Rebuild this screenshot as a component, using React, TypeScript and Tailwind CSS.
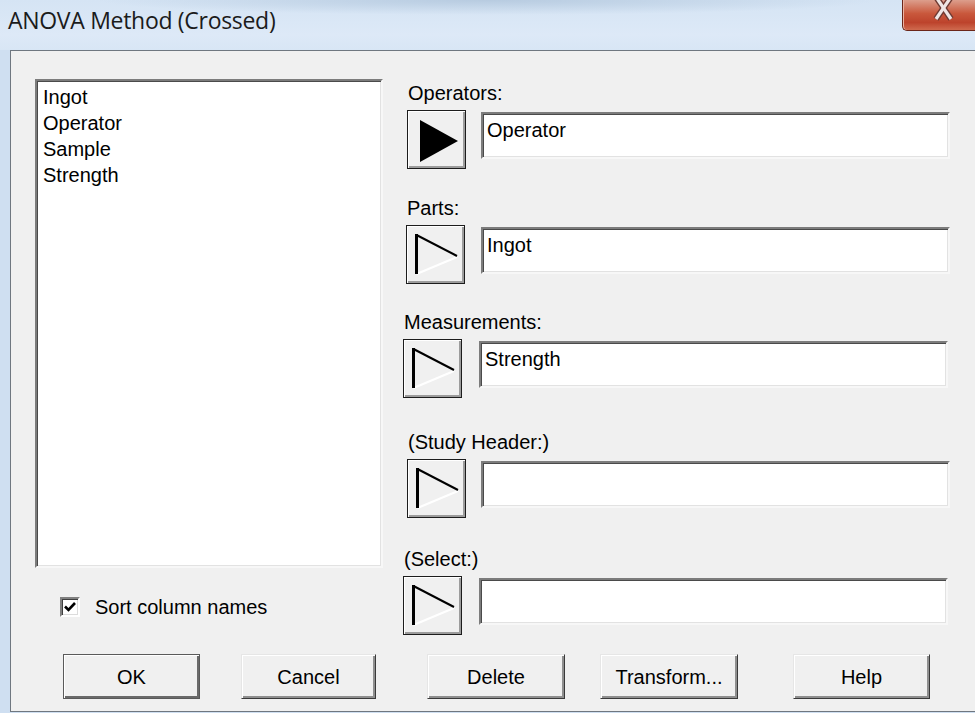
import React from 'react';

type FieldProps = {
  label: string;
  value?: string;
  filled?: boolean;
  mt: number;
  btnX: number;
  boxX: number;
};

// Small triangle arrow drawn on the picker buttons
function ArrowGlyph({ filled }: { filled?: boolean }) {
  if (filled) {
    return (
      <svg width="57" height="57" viewBox="1 1 57 57" className="block">
        <polygon points="13,10 51,31 13,52" fill="#000" />
      </svg>
    );
  }
  return (
    <svg width="57" height="57" viewBox="1 1 57 57" className="block">
      <line x1="10.5" y1="49" x2="51" y2="32" stroke="#ffffff" strokeWidth="2" />
      <line x1="10.5" y1="10" x2="51" y2="31" stroke="#000" strokeWidth="2" />
      <line x1="10.5" y1="9" x2="10.5" y2="49" stroke="#000" strokeWidth="3" />
    </svg>
  );
}

const fieldRows: FieldProps[] = [
  { label: 'Operators:', value: 'Operator', filled: true, mt: 31, btnX: 407, boxX: 481 },
  { label: 'Parts:', value: 'Ingot', mt: 28, btnX: 406, boxX: 481 },
  { label: 'Measurements:', value: 'Strength', mt: 27, btnX: 403, boxX: 479 },
  { label: '(Study Header:)', mt: 33, btnX: 407, boxX: 481 },
  { label: '(Select:)', mt: 30, btnX: 403, boxX: 479 },
];

const sunken =
  'border-2 border-t-[#7c7c7c] border-l-[#7c7c7c] border-r-[#f7f7f7] border-b-[#f7f7f7] shadow-[inset_1px_1px_0_#4a4a4a,inset_-1px_-1px_0_#e2e2e2] bg-white';

function Field({ label, value, filled, mt, btnX, boxX }: FieldProps) {
  const rightEdge = boxX === 481 ? 950 : 948;
  return (
    <div style={{ marginTop: mt }}>
      <div className="h-[22px] leading-[22px]" style={{ marginLeft: btnX - 403 + 1 }}>
        {label}
      </div>
      <div className="mt-[6px] flex items-start">
        <button
          className="w-[59px] h-[59px] shrink-0 border border-[#1c1c1c] bg-[#f0f0f0] p-0 shadow-[inset_1px_1px_0_#ffffff,inset_-2px_-2px_0_#9c9c9c]"
          style={{ marginLeft: btnX - 403 }}
        >
          <ArrowGlyph filled={filled} />
        </button>
        <div
          className={`mt-[2px] h-[47px] pl-[4px] pt-[5px] leading-[22px] ${sunken}`}
          style={{ marginLeft: boxX - btnX - 59, width: rightEdge - boxX }}
        >
          {value}
        </div>
      </div>
    </div>
  );
}

function PushButton({ children, w, ml, isDefault }: { children: React.ReactNode; w: number; ml: number; isDefault?: boolean }) {
  return (
    <button
      className={`h-[45px] shrink-0 bg-[#f0f0f0] leading-[22px] ${
        isDefault
          ? 'border border-[#5a5a5a] shadow-[inset_1px_1px_0_#ffffff,inset_-2px_-2px_0_#6a6a6a]'
          : 'border border-t-[#e6e6e6] border-l-[#e6e6e6] border-r-[#3a3a3a] border-b-[#3a3a3a] shadow-[inset_1px_1px_0_#ffffff,inset_-2px_-2px_0_#8f8f8f]'
      }`}
      style={{ width: w, marginLeft: ml }}
    >
      {children}
    </button>
  );
}

export default function App() {
  const columns = ['Ingot', 'Operator', 'Sample', 'Strength'];

  return (
    <div className="w-[975px] h-[713px] overflow-hidden bg-[#cfdff1] font-['Liberation_Sans',Arial,sans-serif] text-[20px] text-black">
      {/* Window caption */}
      <div className="h-[50px] flex items-start bg-[radial-gradient(ellipse_40%_30%_at_50%_0%,#b7cbe0_0%,rgba(183,203,224,0)_100%),linear-gradient(#d5e4f4,#dde9f7_70%,#d8e6f5)]">
        <div className="pl-[8px] pt-[5px] leading-[30px] text-[23px] text-[#1b1b1b] font-['Open_Sans',sans-serif] tracking-[-0.3px]">
          ANOVA Method (Crossed)
        </div>
        <div className="ml-auto mr-[-8px] w-[81px] h-[31px] shrink-0 rounded-bl-[5px] border-l border-b border-[#6b2619] bg-[linear-gradient(#dc9e8c,#c9583c_45%,#bd432c_75%,#cf6a4e)] shadow-[inset_1px_0_0_#eab4a4]">
          <svg width="81" height="31" viewBox="0 0 81 31" className="block">
            <g strokeLinecap="butt">
              <line x1="33" y1="-3" x2="48" y2="19" stroke="#6e3a32" strokeWidth="6" />
              <line x1="48" y1="-3" x2="33" y2="19" stroke="#6e3a32" strokeWidth="6" />
              <line x1="33" y1="-3" x2="48" y2="19" stroke="#efe6e4" strokeWidth="3.2" />
              <line x1="48" y1="-3" x2="33" y2="19" stroke="#efe6e4" strokeWidth="3.2" />
            </g>
          </svg>
        </div>
      </div>

      {/* Dialog client area */}
      <div className="ml-[10px] h-[662px] bg-[#f0f0f0] border-l border-t border-b border-[#6f7780] flex flex-col">
        <div className="h-[603px] flex">
          <div className="pl-[24px] pt-[28px]">
            <div className={`w-[348px] h-[489px] pl-[6px] pt-[3px] ${sunken}`}>
              {columns.map((c) => (
                <div key={c} className="h-[26px] leading-[26px]">
                  {c}
                </div>
              ))}
            </div>
            <div className="mt-[28px] ml-[25px] flex items-center h-[22px]">
              <div className="w-[20px] h-[20px] border-2 border-t-[#808080] border-l-[#808080] border-r-white border-b-white shadow-[inset_1px_1px_0_#404040,inset_-1px_-1px_0_#dcdcdc] bg-white flex items-center justify-center">
                <svg width="14" height="14" viewBox="0 0 14 14">
                  <polyline points="2,6.5 5.5,10 12,3" fill="none" stroke="#000" strokeWidth="2.6" />
                </svg>
              </div>
              <span className="ml-[15px] leading-[22px]">Sort column names</span>
            </div>
          </div>

          <div className="ml-[20px]">
            {fieldRows.map((f) => (
              <Field key={f.label} {...f} />
            ))}
          </div>
        </div>

        <div className="flex">
          <PushButton w={137} ml={52} isDefault>OK</PushButton>
          <PushButton w={135} ml={41}>Cancel</PushButton>
          <PushButton w={138} ml={51}>Delete</PushButton>
          <PushButton w={138} ml={35}>Transform...</PushButton>
          <PushButton w={137} ml={55}>Help</PushButton>
        </div>
      </div>
    </div>
  );
}
